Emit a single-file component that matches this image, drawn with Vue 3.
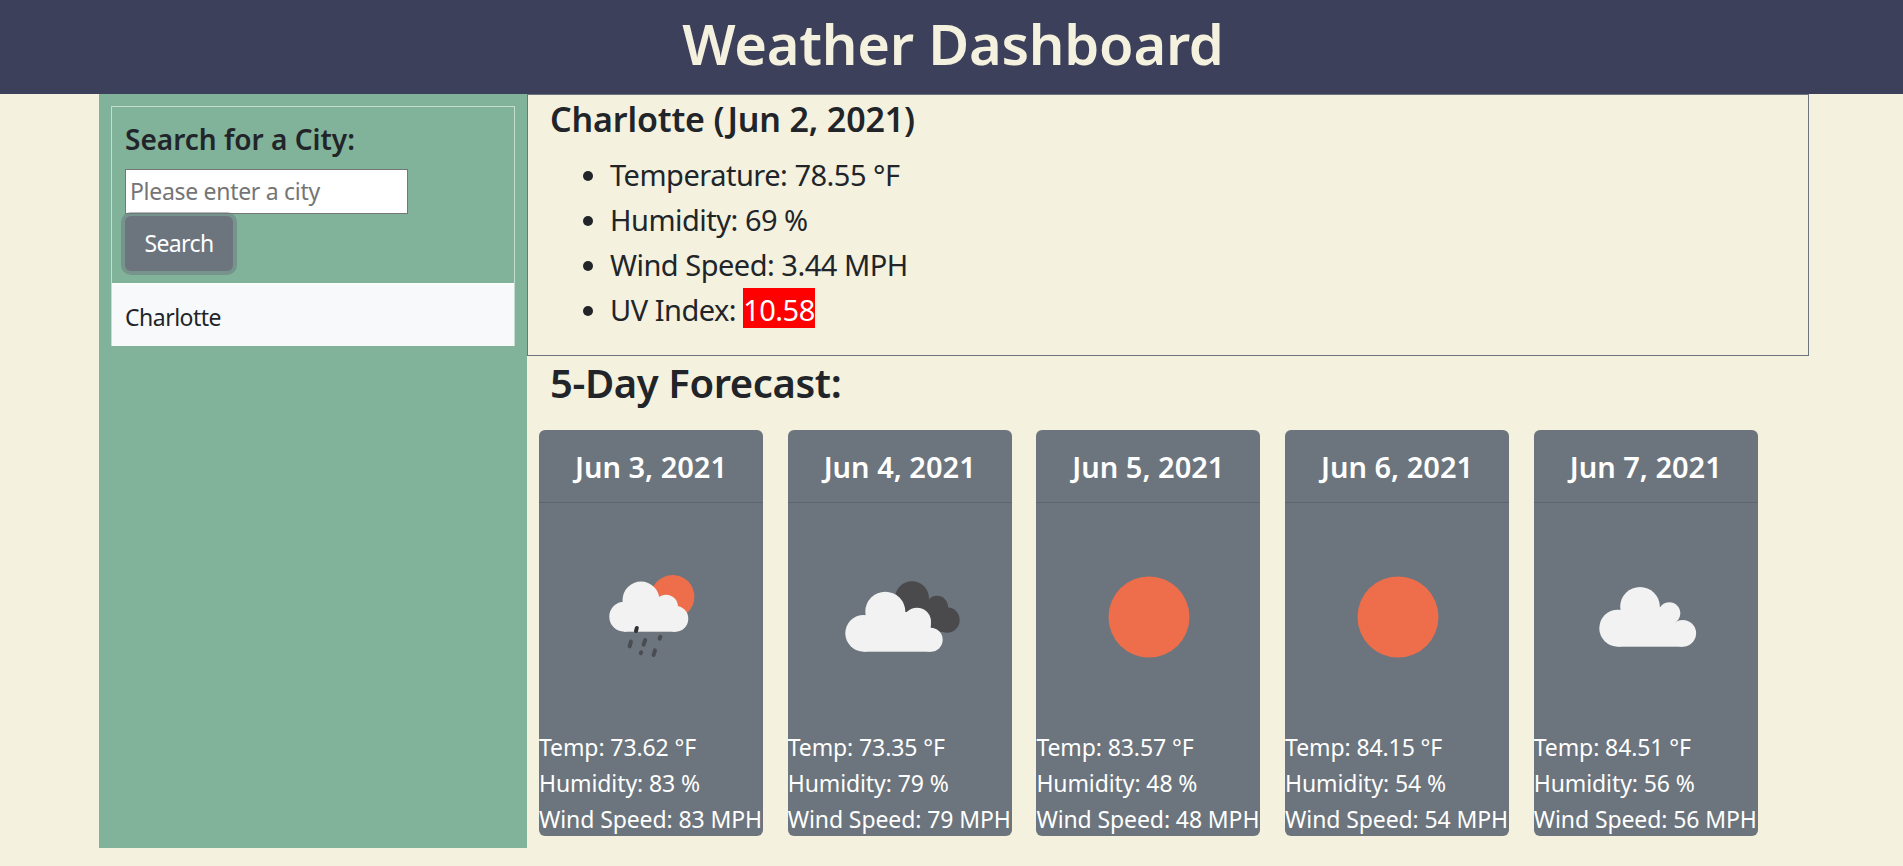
<template>
  <div class="page">
    <header class="top">
      <h1>Weather Dashboard</h1>
    </header>

    <div class="layout">
      <aside class="side">
        <div class="search-card">
          <div class="search-body">
            <h5>Search for a City:</h5>
            <input type="text" placeholder="Please enter a city" />
            <button type="button">Search</button>
          </div>
          <div class="history">Charlotte</div>
        </div>
      </aside>

      <main class="main">
        <section class="today">
          <h3>Charlotte (Jun 2, 2021)</h3>
          <ul>
            <li>Temperature: 78.55 °F</li>
            <li>Humidity: 69 %</li>
            <li>Wind Speed: 3.44 MPH</li>
            <li>UV Index: <span class="uv">10.58</span></li>
          </ul>
        </section>

        <h2>5-Day Forecast:</h2>

        <div class="cards">
          <article v-for="day in days" :key="day.date" class="card">
            <div class="card-head">{{ day.date }}</div>
            <div class="card-icon">
              <svg width="120" height="120" viewBox="0 0 120 120">
                <template v-if="day.icon === 'sun'">
                  <circle cx="60" cy="60" r="40.5" fill="#ee6e4c" />
                </template>

                <template v-else-if="day.icon === 'rain'">
                  <circle cx="80.7" cy="39.7" r="21.7" fill="#ee6e4c" />
                  <g fill="#f2f2f2">
                    <circle cx="49" cy="43" r="18.5" />
                    <circle cx="32.3" cy="59.7" r="15" />
                    <circle cx="74" cy="49.7" r="12" />
                    <circle cx="83.3" cy="61.7" r="13" />
                    <rect x="32" y="52" width="52" height="22.7" />
                  </g>
                  <g stroke="#4a4d52" stroke-width="4" stroke-linecap="round">
                    <path d="M44.8 71 44 74" stroke="#2f3134" />
                    <path d="M39 84.6 37.6 89.4" />
                    <path d="M53.2 83 51.6 87.6" />
                    <path d="M68.4 79.8 67.6 81.6" />
                    <path d="M49.2 95.4 48.8 96.2" />
                    <path d="M63 93.4 61.6 98" />
                  </g>
                </template>

                <template v-else-if="day.icon === 'clouds'">
                  <g fill="#4a4a4c">
                    <circle cx="71" cy="41.3" r="17" />
                    <circle cx="96" cy="49.7" r="11" />
                    <circle cx="106" cy="63" r="12.7" />
                    <rect x="70" y="45" width="36" height="30" />
                  </g>
                  <g fill="#f2f2f2">
                    <circle cx="44.3" cy="54.7" r="20" />
                    <circle cx="22.7" cy="76.3" r="18.4" />
                    <circle cx="76" cy="64.7" r="14" />
                    <circle cx="89.7" cy="82.7" r="12" />
                    <rect x="22.7" y="66" width="67" height="28.7" />
                    <rect x="55" y="55" width="20" height="12" />
                  </g>
                </template>

                <template v-else>
                  <g fill="#f2f2f2">
                    <circle cx="53" cy="49.7" r="19.8" />
                    <circle cx="30.8" cy="71.2" r="18.5" />
                    <circle cx="82.3" cy="56.3" r="11" />
                    <circle cx="95.7" cy="76.3" r="13.4" />
                    <rect x="30.8" y="66" width="65" height="23.7" />
                    <rect x="50" y="50" width="35" height="17" />
                  </g>
                </template>
              </svg>
            </div>
            <div class="card-text">
              <div>Temp: {{ day.temp }} °F</div>
              <div>Humidity: {{ day.humidity }} %</div>
              <div>Wind Speed: {{ day.humidity }} MPH</div>
            </div>
          </article>
        </div>
      </main>
    </div>
  </div>
</template>

<script setup>
const days = [
  { date: 'Jun 3, 2021', icon: 'rain', temp: '73.62', humidity: 83 },
  { date: 'Jun 4, 2021', icon: 'clouds', temp: '73.35', humidity: 79 },
  { date: 'Jun 5, 2021', icon: 'sun', temp: '83.57', humidity: 48 },
  { date: 'Jun 6, 2021', icon: 'sun', temp: '84.15', humidity: 54 },
  { date: 'Jun 7, 2021', icon: 'cloud', temp: '84.51', humidity: 56 },
]
</script>

<style>
html,
body {
  margin: 0;
  background: #f4f1de;
}
</style>

<style scoped>
.page {
  min-height: 866px;
  background: #f4f1de;
  color: #212529;
  font-family: 'Noto Sans', 'Open Sans', sans-serif;
}

.top {
  height: 94px;
  box-sizing: border-box;
  padding: 0 0 7px 3px;
  display: flex;
  align-items: center;
  justify-content: center;
  background: #3d405b;
}

.top h1 {
  margin: 0;
  color: #f4f1de;
  font-size: 56px;
  font-weight: 600;
  letter-spacing: -0.25px;
  line-height: 1.2;
}

.layout {
  display: flex;
  margin: 0 94px 0 99px;
}

.side {
  width: 428px;
  flex-shrink: 0;
  padding: 12px;
  box-sizing: border-box;
  background: #81b29a;
}

.search-card {
  border: 1px solid rgba(255, 255, 255, 0.55);
  border-bottom: 0;
}

.search-body {
  display: flex;
  flex-direction: column;
  align-items: flex-start;
  padding: 12px 13px 12px;
  height: 176px;
  box-sizing: border-box;
}

.search-body h5 {
  margin: 0 0 10px;
  font-size: 28px;
  font-weight: 600;
  line-height: 40px;
}

.search-body input {
  width: 283px;
  height: 45px;
  padding: 0 4px;
  border: 1px solid #767676;
  box-sizing: border-box;
  font-family: inherit;
  font-size: 23px;
  letter-spacing: -0.3px;
}

.search-body input::placeholder {
  color: #757575;
}

.search-body button {
  width: 108px;
  height: 56px;
  margin-top: 2px;
  border: 0;
  border-radius: 6px;
  background: #6c757d;
  box-shadow: 0 0 0 4px rgba(108, 117, 125, 0.5);
  color: #fff;
  font-family: inherit;
  font-size: 23px;
  letter-spacing: -0.6px;
}

.history {
  padding: 12px 13px;
  height: 63px;
  box-sizing: border-box;
  border-top: 2px solid rgba(255, 255, 255, 0.6);
  background: #f8f9fa;
  font-size: 23px;
  letter-spacing: -0.5px;
  line-height: 40px;
}

.main {
  flex: 1;
  min-width: 0;
}

.today {
  height: 262px;
  box-sizing: border-box;
  padding: 0 22px;
  border: 1px solid #6c757d;
}

.today h3 {
  margin: 0;
  font-size: 34px;
  font-weight: 600;
  letter-spacing: -0.15px;
  line-height: 48px;
}

.today ul {
  margin: 9px 0 0;
  padding-left: 60px;
  font-size: 29px;
  letter-spacing: -0.5px;
  line-height: 45px;
}

.uv {
  display: inline-block;
  padding-top: 4px;
  background: #ff0000;
  color: #fff;
  line-height: 36px;
}

.main h2 {
  margin: 0;
  padding: 0 23px;
  height: 74px;
  box-sizing: border-box;
  font-size: 40px;
  font-weight: 600;
  letter-spacing: -0.4px;
  line-height: 54px;
}

.cards {
  display: flex;
  gap: 24.7px;
  padding: 0 12px 12px;
}

.card {
  width: 224px;
  height: 406px;
  flex-shrink: 0;
  display: flex;
  flex-direction: column;
  border-radius: 6px;
  overflow: hidden;
  background: #6c757d;
  color: #fff;
}

.card-head {
  height: 73px;
  flex-shrink: 0;
  box-sizing: border-box;
  border-bottom: 1px solid rgba(0, 0, 0, 0.125);
  font-size: 29px;
  font-weight: 600;
  line-height: 73px;
  text-align: center;
}

.card-icon {
  flex: 1;
  display: flex;
  align-items: center;
  justify-content: center;
  padding: 3px 0 0 2px;
}

.card-text {
  padding-top: 1px;
  margin-bottom: -1px;
  font-size: 23px;
  letter-spacing: -0.1px;
  line-height: 36px;
  white-space: nowrap;
}
</style>
